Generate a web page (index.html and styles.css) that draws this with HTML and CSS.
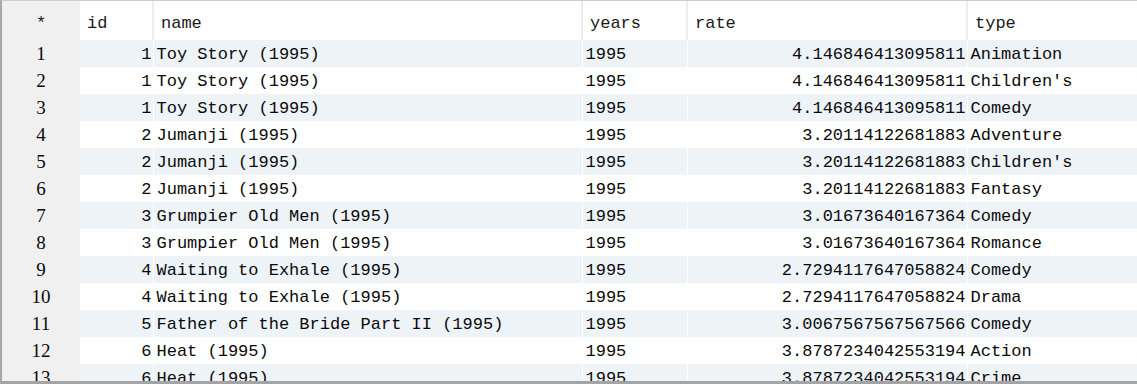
FILE: index.html
```html
<!DOCTYPE html>
<html>
<head>
<meta charset="utf-8">
<link rel="stylesheet" href="styles.css">
</head>
<body>
<div class="grid-wrap">
<table class="grid">
<colgroup>
<col class="c-num"><col class="c-id"><col class="c-name"><col class="c-years"><col class="c-rate"><col class="c-type">
</colgroup>
<thead>
<tr><th class="rn">*</th><th>id</th><th>name</th><th>years</th><th>rate</th><th>type</th></tr>
</thead>
<tbody>
<tr><td class="rn">1</td><td class="r">1</td><td>Toy Story (1995)</td><td>1995</td><td class="r">4.146846413095811</td><td>Animation</td></tr>
<tr><td class="rn">2</td><td class="r">1</td><td>Toy Story (1995)</td><td>1995</td><td class="r">4.146846413095811</td><td>Children's</td></tr>
<tr><td class="rn">3</td><td class="r">1</td><td>Toy Story (1995)</td><td>1995</td><td class="r">4.146846413095811</td><td>Comedy</td></tr>
<tr><td class="rn">4</td><td class="r">2</td><td>Jumanji (1995)</td><td>1995</td><td class="r">3.20114122681883</td><td>Adventure</td></tr>
<tr><td class="rn">5</td><td class="r">2</td><td>Jumanji (1995)</td><td>1995</td><td class="r">3.20114122681883</td><td>Children's</td></tr>
<tr><td class="rn">6</td><td class="r">2</td><td>Jumanji (1995)</td><td>1995</td><td class="r">3.20114122681883</td><td>Fantasy</td></tr>
<tr><td class="rn">7</td><td class="r">3</td><td>Grumpier Old Men (1995)</td><td>1995</td><td class="r">3.01673640167364</td><td>Comedy</td></tr>
<tr><td class="rn">8</td><td class="r">3</td><td>Grumpier Old Men (1995)</td><td>1995</td><td class="r">3.01673640167364</td><td>Romance</td></tr>
<tr><td class="rn">9</td><td class="r">4</td><td>Waiting to Exhale (1995)</td><td>1995</td><td class="r">2.7294117647058824</td><td>Comedy</td></tr>
<tr><td class="rn">10</td><td class="r">4</td><td>Waiting to Exhale (1995)</td><td>1995</td><td class="r">2.7294117647058824</td><td>Drama</td></tr>
<tr><td class="rn">11</td><td class="r">5</td><td>Father of the Bride Part II (1995)</td><td>1995</td><td class="r">3.0067567567567566</td><td>Comedy</td></tr>
<tr><td class="rn">12</td><td class="r">6</td><td>Heat (1995)</td><td>1995</td><td class="r">3.8787234042553194</td><td>Action</td></tr>
<tr><td class="rn">13</td><td class="r">6</td><td>Heat (1995)</td><td>1995</td><td class="r">3.8787234042553194</td><td>Crime</td></tr>
</tbody>
</table>
</div>
</body>
</html>
```

FILE: styles.css
```css
html, body {
  margin: 0;
  padding: 0;
  background: #ffffff;
}

.grid-wrap {
  width: 1137px;
  height: 384px;
  box-sizing: border-box;
  overflow: hidden;
  border-top: 1px solid #cdcdcd;
  border-left: 2px solid #a8a8a8;
  border-bottom: 3px solid #a4a4a4;
  background: #ffffff;
}

.grid {
  border-collapse: collapse;
  table-layout: fixed;
  width: 1135px;
  font-family: "Liberation Mono", "DejaVu Sans Mono", monospace;
  font-size: 17px;
  color: #0a0a0a;
}

.c-num { width: 78px; }
.c-id { width: 73px; }
.c-name { width: 429px; }
.c-years { width: 105px; }
.c-rate { width: 280px; }
.c-type { width: 170px; }

.grid th {
  height: 39px;
  padding: 6px 0 0 7px;
  text-align: left;
  font-weight: normal;
  color: #1a1a1a;
  background: #ffffff;
  border-right: 2px solid #ececec;
  box-sizing: border-box;
  vertical-align: middle;
  white-space: nowrap;
}

.grid th:last-child {
  border-right: 0;
}

.grid td {
  height: 27px;
  padding: 1px 1px 0 3px;
  border-right: 1px solid #ffffff;
  white-space: nowrap;
  overflow: hidden;
  vertical-align: middle;
  box-sizing: border-box;
}

.grid tbody tr:nth-child(odd) td {
  background: #eef3f8;
}

.grid .rn,
.grid tbody tr:nth-child(odd) td.rn {
  background: #f0f0f0;
  text-align: center;
  padding: 1px 0 0 0;
  border-right: 0;
  font-family: "Liberation Serif", serif;
  font-size: 19px;
}

.grid th.rn {
  font-family: "Liberation Mono", monospace;
  font-size: 17px;
  padding-top: 6px;
  border-right: 0;
}

.grid td.r {
  text-align: right;
  padding-right: 1px;
}
```
